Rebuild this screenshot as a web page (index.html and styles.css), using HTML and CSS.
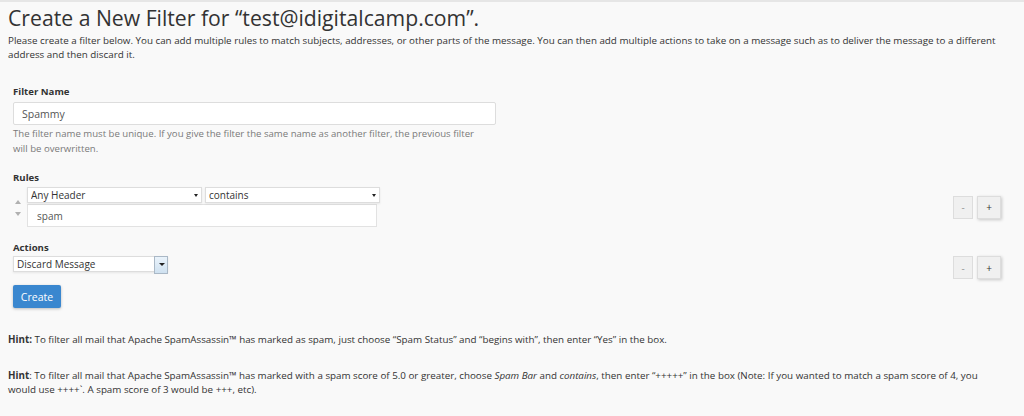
FILE: index.html
```html
<!DOCTYPE html>
<html lang="en">

<head>
    <meta charset="UTF-8">
    <meta name="viewport" content="width=device-width, initial-scale=1.0">
    <title>Create a New Filter</title>
    <link rel="stylesheet" href="styles.css">
</head>

<body>
    <h1 class="page-title">Create a New Filter for “test@idigitalcamp.com”.</h1>
    <p class="intro">Please create a filter below. You can add multiple rules to match subjects, addresses, or other parts of the message. You can then add multiple actions to take on a message such as to deliver the message to a different address and then discard it.</p>

    <form class="filter-form">
        <div class="form-group">
            <label for="filtername">Filter Name</label>
            <input type="text" id="filtername" class="name-input" value="Spammy">
            <p class="help-text">The filter name must be unique. If you give the filter the same name as another filter, the previous filter will be overwritten.</p>
        </div>

        <div class="form-group rules">
            <label>Rules</label>
            <div class="row rule-row">
                <div class="rule-left">
                    <div class="order-arrows">
                        <span class="arrow-up"></span>
                        <span class="arrow-down"></span>
                    </div>
                    <div class="rule-fields">
                        <div class="select-pair">
                            <span class="select-wrap wide">
                                <select>
                                    <option>Any Header</option>
                                </select>
                            </span>
                            <span class="select-wrap wide">
                                <select>
                                    <option>contains</option>
                                </select>
                            </span>
                        </div>
                        <input type="text" class="rule-input" value="spam">
                    </div>
                </div>
                <div class="row-buttons">
                    <button type="button" class="btn-minus">-</button>
                    <button type="button" class="btn-plus">+</button>
                </div>
            </div>
        </div>

        <div class="form-group actions">
            <label>Actions</label>
            <div class="row action-row">
                <span class="select-wrap action">
                    <select>
                        <option>Discard Message</option>
                    </select>
                </span>
                <div class="row-buttons">
                    <button type="button" class="btn-minus">-</button>
                    <button type="button" class="btn-plus">+</button>
                </div>
            </div>
        </div>

        <button type="button" class="btn-create">Create</button>
    </form>

    <p class="hint"><strong>Hint:</strong> To filter all mail that Apache SpamAssassin™ has marked as spam, just choose “Spam Status” and “begins with”, then enter “Yes” in the box.</p>
    <p class="hint"><strong>Hint</strong>: To filter all mail that Apache SpamAssassin™ has marked with a spam score of 5.0 or greater, choose <em>Spam Bar</em> and <em>contains</em>, then enter “+++++” in the box (Note: If you wanted to match a spam score of 4, you would use ++++`. A spam score of 3 would be +++, etc).</p>
</body>

</html>
```

FILE: styles.css
```css
* {
    box-sizing: border-box;
    margin: 0;
    padding: 0;
}

body {
    font-family: "Open Sans", "Liberation Sans", sans-serif;
    font-size: 9.8px;
    color: #333;
    background: #f9f9f9;
    border-top: 2px solid #e6e6e6;
    padding: 0 20px 0 8px;
}

.page-title {
    font-size: 21.2px;
    font-weight: 400;
    line-height: 30px;
    margin-top: 1px;
}

.intro {
    line-height: 14px;
    margin-top: 1px;
}

.filter-form {
    padding: 0 3px 3px 5px;
}

.form-group label {
    display: block;
    font-weight: bold;
    font-size: 9.6px;
    line-height: 14px;
}

.form-group:first-child {
    margin-top: 23px;
}

.name-input {
    display: block;
    width: 483px;
    height: 23px;
    margin-top: 3px;
    padding: 0 8px;
    border: 1px solid #ddd;
    border-radius: 2px;
    background: #fff;
    font-family: inherit;
    font-size: 10.5px;
    color: #555;
}

.help-text {
    width: 472px;
    color: #7a7a7a;
    font-size: 9.6px;
    line-height: 15px;
    margin-top: 1px;
}

.rules {
    margin-top: 15px;
}

.row {
    display: flex;
    justify-content: space-between;
}

.rule-row {
    margin-top: 2px;
    align-items: center;
}

.rule-left {
    display: flex;
    align-items: center;
}

.order-arrows {
    width: 14px;
    display: flex;
    flex-direction: column;
    align-items: flex-start;
    padding-left: 2px;
    row-gap: 8px;
    margin-top: 2px;
}

.arrow-up {
    border-left: 3px solid transparent;
    border-right: 3px solid transparent;
    border-bottom: 4px solid #b0b0b0;
}

.arrow-down {
    border-left: 3px solid transparent;
    border-right: 3px solid transparent;
    border-top: 4px solid #b0b0b0;
}

.select-pair {
    display: flex;
    column-gap: 3px;
}

.select-wrap {
    position: relative;
    display: block;
}

.select-wrap select {
    appearance: none;
    display: block;
    height: 16px;
    padding: 0 3px;
    border: 1px solid #ddd;
    background: #fff;
    font-family: inherit;
    font-size: 10px;
    line-height: 14px;
    color: #333;
    box-shadow: 0 1px 2px rgba(0, 0, 0, 0.08);
}

.select-wrap.wide select {
    width: 175px;
}

.select-wrap.wide::after {
    content: "";
    position: absolute;
    right: 4px;
    top: 7px;
    border-left: 2.5px solid transparent;
    border-right: 2.5px solid transparent;
    border-top: 3px solid #222;
}

.rule-input {
    display: block;
    width: 350px;
    height: 23px;
    margin-top: 1px;
    padding: 0 9px;
    border: 1px solid #e2e2e2;
    background: #fff;
    font-family: inherit;
    font-size: 10px;
    color: #555;
}

.row-buttons {
    display: flex;
    column-gap: 4px;
}

.btn-minus,
.btn-plus {
    height: 23px;
    border: 1px solid #ddd;
    background: #f0f0f0;
    font-family: inherit;
    font-size: 10px;
    color: #999;
}

.btn-minus {
    width: 20px;
}

.btn-plus {
    width: 24px;
    color: #333;
    box-shadow: 1px 1px 3px rgba(0, 0, 0, 0.2);
}

.actions {
    margin-top: 14px;
}

.action-row {
    margin-top: 1px;
    align-items: flex-start;
}

.select-wrap.action select {
    width: 155px;
}

.select-wrap.action::after {
    content: "";
    position: absolute;
    right: 0;
    top: 0;
    width: 12px;
    height: 16px;
    border: 1px solid #aab8c6;
    background: linear-gradient(#eaf3fb, #cfe1f0);
}

.select-wrap.action::before {
    content: "";
    position: absolute;
    right: 3px;
    top: 7px;
    z-index: 1;
    border-left: 3px solid transparent;
    border-right: 3px solid transparent;
    border-top: 3px solid #222;
}

.btn-create {
    display: block;
    margin-top: 6px;
    width: 48px;
    height: 23px;
    border: none;
    border-radius: 2px;
    background: #3a87cf;
    color: #fff;
    font-family: inherit;
    font-size: 10.5px;
    box-shadow: 0 1px 3px rgba(0, 0, 0, 0.25);
}

.hint {
    line-height: 14px;
    margin-top: 22px;
}

.hint strong {
    font-weight: bold;
}
```
